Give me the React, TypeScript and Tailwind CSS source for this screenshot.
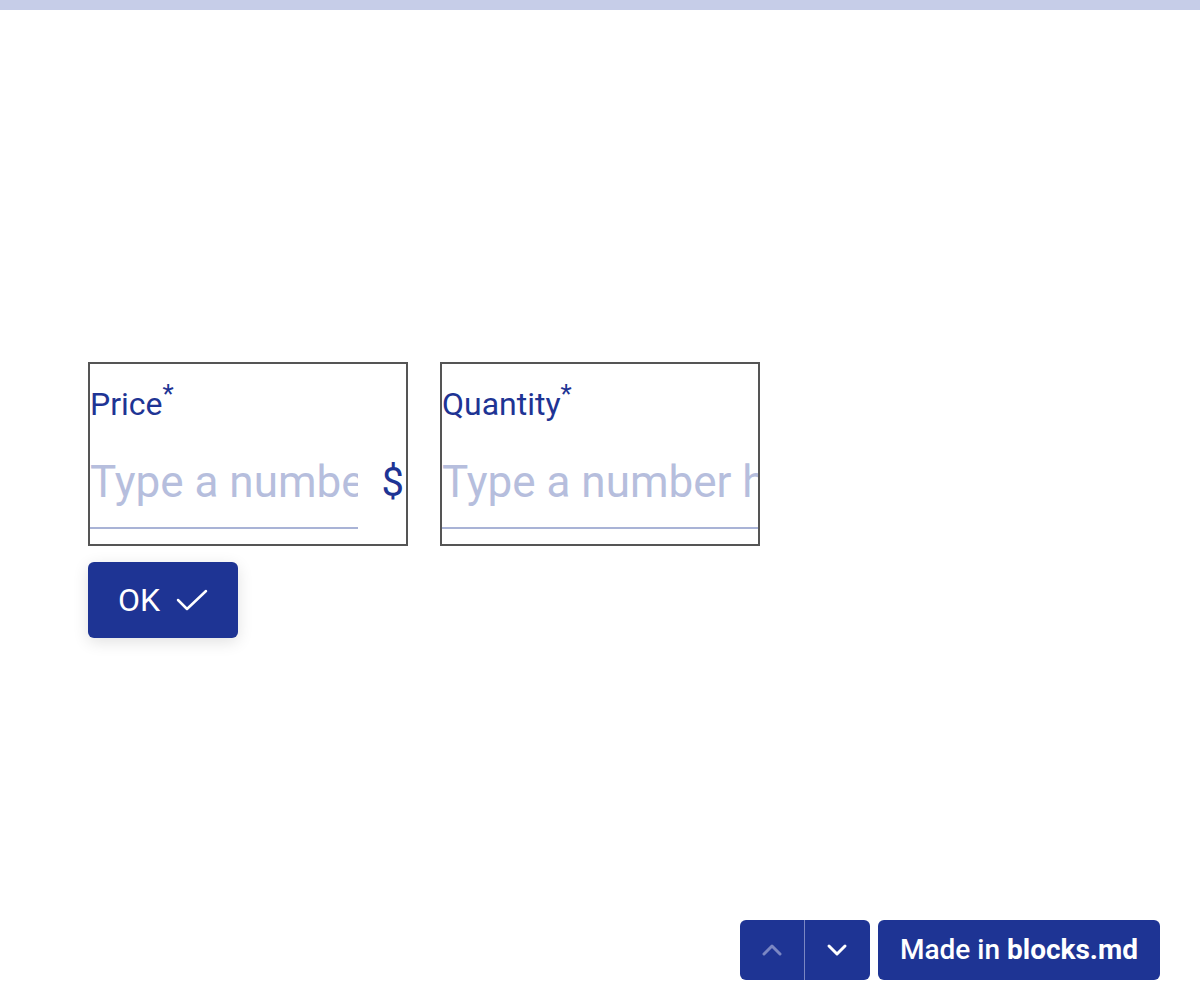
import { useState } from "react";

const font = { fontFamily: "Roboto, 'Noto Sans', sans-serif" };

function NumberField({ label, unit }: { label: string; unit?: string }) {
  const [value, setValue] = useState("");
  return (
    <div className="w-[320px] h-[184px] border-2 border-[#555555] flex flex-col">
      <label className="mt-[20px] text-[32px] leading-[40px] text-[#1e3494]">
        {label}
        <span className="text-[26px] relative top-[-12px]">*</span>
      </label>
      <div className="flex items-center mt-[11px]">
        <input
          value={value}
          onChange={(e) => setValue(e.target.value)}
          placeholder="Type a number here"
          className="min-w-0 flex-1 h-[92px] text-[44px] text-[#1e3494] placeholder:text-[#b6bedd] outline-none border-b-2 border-[#a9b3d6] bg-transparent"
        />
        {unit && <span className="text-[40px] text-[#1e3494] ml-[24px] mr-[2px]">{unit}</span>}
      </div>
    </div>
  );
}

export default function App() {
  return (
    <div style={font} className="min-h-[1000px] bg-white flex flex-col">
      <div className="h-[10px] bg-[#c6cde8]" />

      <div className="pl-[88px] pt-[352px] flex flex-col">
        <div className="flex gap-[32px]">
          <NumberField label="Price" unit="$" />
          <NumberField label="Quantity" />
        </div>
        <button className="mt-[16px] w-[150px] h-[76px] rounded-[6px] bg-[#1e3494] text-white text-[32px] flex items-center justify-center gap-[16px] shadow-[0_4px_16px_rgba(0,0,0,0.12)]">
          OK
          <svg width="32" height="24" viewBox="0 0 32 24" fill="none" stroke="white" strokeWidth="2.5" strokeLinecap="round" strokeLinejoin="round">
            <path d="M2 12 L11 21 L30 3" />
          </svg>
        </button>
      </div>

      <div className="mt-auto mb-[20px] mr-[40px] flex justify-end gap-[8px]">
        <div className="flex h-[60px] rounded-[6px] bg-[#1e3494] overflow-hidden">
          <button className="w-[65px] flex items-center justify-center border-r border-[#7b87c3]">
            <svg width="22" height="14" viewBox="0 0 22 14" fill="none" stroke="#7b87c3" strokeWidth="3" strokeLinecap="round" strokeLinejoin="round">
              <path d="M3 11 L11 3 L19 11" />
            </svg>
          </button>
          <button className="w-[65px] flex items-center justify-center">
            <svg width="22" height="14" viewBox="0 0 22 14" fill="none" stroke="white" strokeWidth="3" strokeLinecap="round" strokeLinejoin="round">
              <path d="M3 3 L11 11 L19 3" />
            </svg>
          </button>
        </div>
        <button className="h-[60px] px-[22px] rounded-[6px] bg-[#1e3494] text-white text-[28px] font-medium">
          Made in <span className="font-bold">blocks.md</span>
        </button>
      </div>
    </div>
  );
}
